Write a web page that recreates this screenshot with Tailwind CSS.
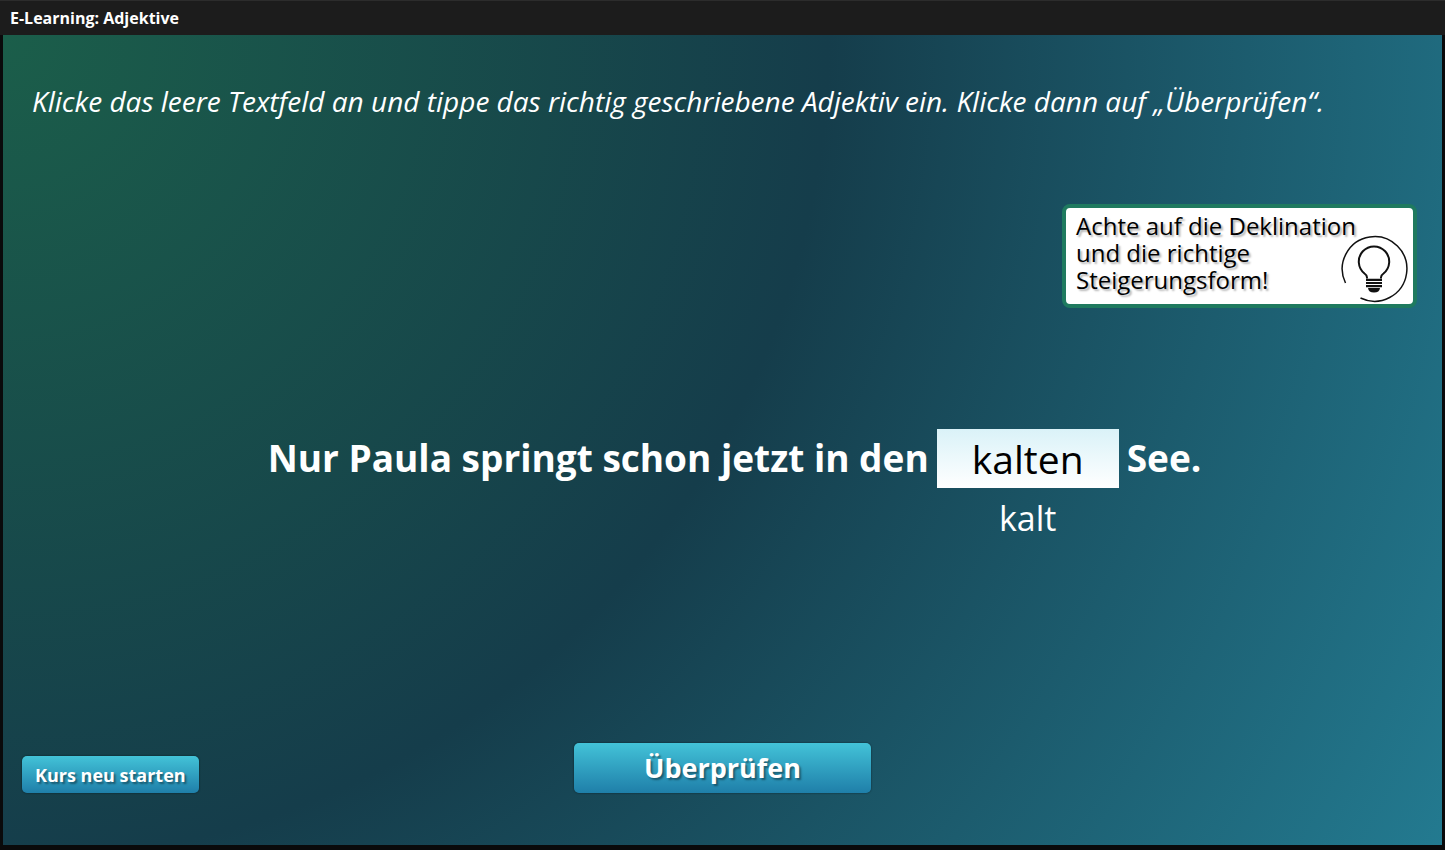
<!DOCTYPE html>
<html lang="de">
<head>
<meta charset="utf-8">
<meta name="viewport" content="width=device-width, initial-scale=1">
<title>E-Learning: Adjektive</title>
<script src="https://cdn.jsdelivr.net/npm/@tailwindcss/browser@4"></script>
</head>
<body class="flex min-h-screen flex-col bg-[#0a0a0b] font-['Open_Sans','Noto_Sans',sans-serif] text-white">
  <header class="flex h-[35px] shrink-0 items-center border-t border-[#2c2c2c] bg-[#1c1c1c] px-2.5">
    <h1 class="text-base font-bold leading-5">E-Learning: Adjektive</h1>
  </header>
  <main class="mx-[3px] mb-[5px] flex flex-1 flex-col bg-[radial-gradient(circle_farthest-corner_at_top_left,#1b5e4a_0%,#153d4b_50%,#237a90_100%)]">
    <p class="mt-12 px-[29px] text-[28px] italic leading-9">Klicke das leere Textfeld an und tippe das richtig geschriebene Adjektiv ein. Klicke dann auf „Überprüfen“.</p>

    <aside class="relative mt-[85px] mr-[25px] self-end rounded-lg border-4 border-[#1f7a5f] bg-white text-black">
      <p class="h-24 w-[347px] px-2.5 pt-1 text-2xl leading-[27px] [text-shadow:2px_2px_2px_rgba(0,0,0,0.3)]">Achte auf die Deklination<br>und die richtige<br>Steigerungsform!</p>
      <svg class="absolute right-1 bottom-0 size-[70px]" viewBox="0 0 70 70" fill="none" stroke="#111" aria-hidden="true">
        <path d="M6.500 49A32.300 32.300 0 1 1 21.500 64" stroke-width="1.500"/>
        <path d="M28 44.500V43.500C28 41.500 27 40.500 25.500 39.500A15.200 15.200 0 1 1 44.500 39.500C43 40.500 42 41.500 42 43.500V44.500" stroke-width="2"/>
        <path d="M27 45.800h16M27 49h16M27 52.200h16" stroke-width="2.200"/>
        <path d="M29 54h12q-.5 4.500-6 4.500t-6-4.500z" fill="#111" stroke="none"/>
      </svg>
    </aside>

    <form class="flex flex-1 flex-col">
      <div class="mt-[121px] flex items-start justify-center gap-2 pl-6 text-[37px] font-bold leading-[58px]">
        <span>Nur Paula springt schon jetzt in den</span>
        <div class="flex w-[182px] flex-col items-center">
          <input id="antwort" type="text" value="kalten" aria-label="Adjektiv" aria-describedby="grundform" class="h-[59px] w-full bg-linear-to-b from-[#daf2f8] to-white text-center text-[39px] font-normal text-black outline-none">
          <span id="grundform" class="mt-1.5 text-[34px] font-normal leading-12">kalt</span>
        </div>
        <span>See.</span>
      </div>
      <div class="mt-auto mb-[52px] grid grid-cols-[1fr_auto_1fr] items-end px-[19px]">
        <button type="button" class="h-[37px] justify-self-start rounded-[5px] bg-linear-to-b from-[#43c3d8] to-[#1f7fa9] px-[13px] text-lg font-bold shadow-[0_0_2px_rgba(0,0,0,0.6)] [text-shadow:2px_2px_2px_rgba(0,0,0,0.4)]">Kurs neu starten</button>
        <button type="submit" class="h-[50px] w-[297px] rounded-[5px] bg-linear-to-b from-[#43c3d8] to-[#1f7fa9] text-[27px] font-bold shadow-[0_0_2px_rgba(0,0,0,0.6)] [text-shadow:2px_2px_2px_rgba(0,0,0,0.4)]">Überprüfen</button>
      </div>
    </form>
  </main>
</body>
</html>
